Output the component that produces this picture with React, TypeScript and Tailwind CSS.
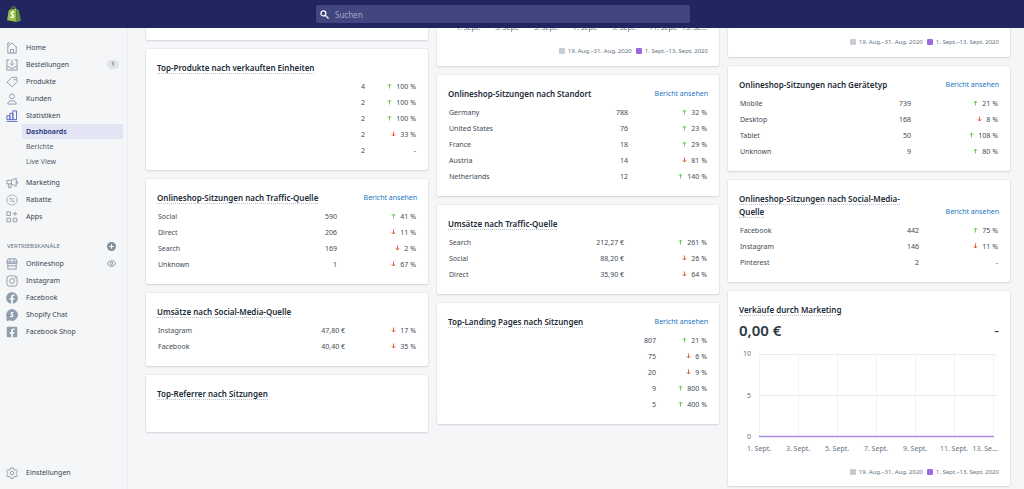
import type { ReactNode } from 'react';
import { FaFacebook, FaFacebookSquare } from 'react-icons/fa';

type Trend = 'up' | 'down' | 'none';

interface Row {
    label?: string;
    value: string;
    trend: Trend;
    change: string;
}

interface ReportCardProps {
    title: string;
    link?: boolean;
    underline?: boolean;
    changeWidth?: string;
    rows: Row[];
}

const up = (value: string, change: string, label = ''): Row => ({ label, value, change, trend: 'up' });
const down = (value: string, change: string, label = ''): Row => ({ label, value, change, trend: 'down' });
const flat = (value: string, label = ''): Row => ({ label, value, change: '-', trend: 'none' });

/* ---------- Icons ---------- */

function Icon({ children, active = false }: { children: ReactNode; active?: boolean }) {
    return (
        <svg
            viewBox="0 0 20 20"
            className={active ? 'h-3 w-3 shrink-0 text-[#5c6ac4]' : 'h-3 w-3 shrink-0 text-[#8f9cab]'}
            fill="none"
            stroke="currentColor"
            strokeWidth="1.6"
            strokeLinejoin="round"
            aria-hidden="true"
        >
            {children}
        </svg>
    );
}

const icons = {
    home: (
        <Icon>
            <path d="M1.500 9.500L10 1.500l8.500 8M3 8.500v10h14v-10M3 7V1.500h4" />
            <path d="M7.500 18.500v-6h5v6" />
        </Icon>
    ),
    orders: (
        <Icon>
            <path d="M6 1.500H1.500v17h17v-17H14" />
            <path d="M1.500 13H6l1.500 2.500h5L14 13h4.500M10 1v9M6.500 7l3.500 3.500L13.500 7" />
        </Icon>
    ),
    products: (
        <Icon>
            <path d="M9.500 2.500l8-.5 1.500 7-8.500 9-9-7.500 8-8z" />
            <circle cx="14.500" cy="6" r="1" />
        </Icon>
    ),
    customers: (
        <Icon>
            <circle cx="10" cy="5.500" r="4" />
            <path d="M3 18.500c0-3.500 2-5.500 7-5.500s7 2 7 5.500H3z" />
        </Icon>
    ),
    analytics: (
        <Icon active>
            <path d="M1.500 9.500h5V16h-5zM6.500 5.500h5V16h-5zM11.500 1.500h6V16h-6z" />
            <path d="M1 19h18" />
        </Icon>
    ),
    marketing: (
        <Icon>
            <path d="M1.500 5.500H9l8-3.500v13.500l-8-4H1.500v-6zM9 5.500v6M4.500 11.500V18h4v-6.500M17 7.500h2v3h-2" />
        </Icon>
    ),
    discounts: (
        <Icon>
            <circle cx="10" cy="10" r="8.500" strokeDasharray="2.600 0.700" />
            <path d="M7 13l6-6" />
            <circle cx="7.500" cy="7.500" r="1" />
            <circle cx="12.500" cy="12.500" r="1" />
        </Icon>
    ),
    apps: (
        <Icon>
            <path d="M1.500 1.500h6v6h-6zM1.500 12h6v6h-6zM12 12h6v6h-6zM15 1v7M11.500 4.500h7" />
        </Icon>
    ),
    store: (
        <Icon>
            <path d="M3.500 1.500h13l2 5v2.500h-17V6.500l2-5zM1.500 6.500h17M3 9.500v9h14v-9M3.500 13h13M6.500 1.500v7.500M13.500 1.500v7.500" />
        </Icon>
    ),
    instagram: (
        <Icon>
            <rect x="1.500" y="1.500" width="17" height="17" rx="4" />
            <circle cx="10" cy="10" r="4" />
            <circle cx="15" cy="5" r="0.500" />
        </Icon>
    ),
    facebook: <FaFacebook className="h-3 w-3 shrink-0 text-[#8f9cab]" />,
    chat: (
        <Icon>
            <path d="M10 1a9 9 0 1 1-4 17l-4.500 1 .5-5A9 9 0 0 1 10 1z" fill="currentColor" />
            <path d="M12.500 6.500c-2-1-4-.5-4 1s3.500 2 3 4-3 1.800-4.500.5" stroke="#fff" strokeWidth="1.900" />
        </Icon>
    ),
    facebookShop: <FaFacebookSquare className="h-3 w-3 shrink-0 text-[#8f9cab]" />,
    settings: (
        <Icon>
            <path d="M8 1.500h4l.6 2.600 2 1.100 2.500-.8 2 3.400L17.200 9.500v1.800l1.900 1.700-2 3.400-2.500-.8-2 1.100-.6 2.300H8l-.6-2.300-2-1.100-2.500.8-2-3.400 1.900-1.700V9.500L.9 7.800l2-3.400 2.500.8 2-1.100L8 1.500z" />
            <circle cx="10" cy="10.300" r="3" />
        </Icon>
    ),
};

function ShopLogo() {
    return (
        <svg viewBox="0 0 26 30" className="h-4 w-3.5" aria-hidden="true">
            <path d="M3 8l14-4 1 26L0 26.500 3 8z" fill="#95bf47" />
            <path d="M17 4l2 2.500 3 .5 4 20.500L18 30 17 4z" fill="#5e8e3e" />
            <path d="M7 8c0-4 3-7 5.500-7S16 4 16 7" fill="none" stroke="#95bf47" strokeWidth="1.500" />
            <path d="M13.500 12c-3-1.300-5.500 0-5 2.300s4 2.500 3.500 5.200-3.500 2.500-5.500 1" fill="none" stroke="#fff" strokeWidth="2.800" />
        </svg>
    );
}

function TrendArrow({ trend }: { trend: Trend }) {
    if (trend === 'none') return null;

    return (
        <svg
            viewBox="0 0 10 12"
            className={trend === 'up' ? 'mr-1 inline h-1.5 w-[5px] align-baseline text-[#50b83c]' : 'mr-1 inline h-1.5 w-[5px] rotate-180 align-baseline text-[#de3618]'}
            fill="none"
            stroke="currentColor"
            strokeWidth="1.600"
            aria-hidden="true"
        >
            <path d="M5 11V2M1.500 5.500L5 2l3.500 3.500" />
        </svg>
    );
}

/* ---------- Navigation ---------- */

function NavItem({ icon, label, badge }: { icon: ReactNode; label: string; badge?: string }) {
    return (
        <a href="#" className="flex h-[17px] items-center gap-2 pr-2 pl-1.5">
            {icon}
            <span className="flex-1">{label}</span>
            {badge && (
                <span className="h-[9px] w-3 rounded-full bg-[#dfe3e8] text-center text-[6px] leading-[9px]">{badge}</span>
            )}
        </a>
    );
}

function Sidebar() {
    return (
        <nav className="flex w-32 shrink-0 flex-col border-r border-[#ebeef1] bg-[#f4f6f8] pt-[11px] pb-2 text-[#3b4550]">
            <NavItem icon={icons.home} label="Home" />
            <NavItem icon={icons.orders} label="Bestellungen" badge="1" />
            <NavItem icon={icons.products} label="Produkte" />
            <NavItem icon={icons.customers} label="Kunden" />
            <NavItem icon={icons.analytics} label="Statistiken" />
            <div className="mr-1 mb-[5px] ml-[22px] flex flex-col text-[#56616d]">
                <a href="#" className="h-[15px] bg-[#e3e4f4] pl-1 leading-[15px] font-semibold text-[#202e78]">Dashboards</a>
                <a href="#" className="h-[15px] pl-1 leading-[15px]">Berichte</a>
                <a href="#" className="h-[15px] pl-1 leading-[15px]">Live View</a>
            </div>
            <NavItem icon={icons.marketing} label="Marketing" />
            <NavItem icon={icons.discounts} label="Rabatte" />
            <NavItem icon={icons.apps} label="Apps" />

            <div className="mt-3 flex h-[18px] items-center justify-between pr-[11px] pl-[7px] text-[6px] text-[#637381]">
                <h2>VERTRIEBSKANÄLE</h2>
                <button type="button" aria-label="Vertriebskanal hinzufügen">
                    <svg viewBox="0 0 20 20" className="h-[9px] w-[9px]">
                        <circle cx="10" cy="10" r="10" fill="#8190a0" />
                        <path d="M10 5v10M5 10h10" stroke="#fff" strokeWidth="2.200" />
                    </svg>
                </button>
            </div>
            <div className="flex items-center justify-between pr-[11px]">
                <NavItem icon={icons.store} label="Onlineshop" />
                <button type="button" aria-label="Onlineshop ansehen">
                    <svg viewBox="0 0 20 20" className="h-[9px] w-[9px]" fill="none" stroke="#74828f" strokeWidth="2">
                        <path d="M1 10c2-4 5-6 9-6s7 2 9 6c-2 4-5 6-9 6s-7-2-9-6z" />
                        <circle cx="10" cy="10" r="2.500" />
                    </svg>
                </button>
            </div>
            <NavItem icon={icons.instagram} label="Instagram" />
            <NavItem icon={icons.facebook} label="Facebook" />
            <NavItem icon={icons.chat} label="Shopify Chat" />
            <NavItem icon={icons.facebookShop} label="Facebook Shop" />

            <div className="mt-auto">
                <NavItem icon={icons.settings} label="Einstellungen" />
            </div>
        </nav>
    );
}

/* ---------- Cards ---------- */

function Card({ children, className = '' }: { children?: ReactNode; className?: string }) {
    return (
        <section className={`rounded-[2px] bg-white px-[11px] shadow-[0_0_0_1px_rgba(63,63,68,0.04),0_1px_2px_0_rgba(63,63,68,0.14)] ${className}`}>
            {children}
        </section>
    );
}

function CardHeader({ title, link, underline = true }: { title: string; link?: boolean; underline?: boolean }) {
    return (
        <div className="flex items-end justify-between gap-8 leading-[13px]">
            <h2 className="text-[8px] font-semibold text-[#212b36]">
                <span className={underline ? 'border-b border-dotted border-[#b9c2cb]' : ''}>{title}</span>
            </h2>
            {link && <a href="#" className="shrink-0 text-[#2276c4]">Bericht ansehen</a>}
        </div>
    );
}

function ReportCard({ title, link, underline, changeWidth = 'w-20', rows }: ReportCardProps) {
    return (
        <Card className="pt-3 pb-[11px]">
            <CardHeader title={title} link={link} underline={underline} />
            <table className="mt-[5px] w-full text-[#414b56]">
                <tbody>
                    {rows.map((row, i) => (
                        <tr key={i} className="h-4">
                            <td className="p-0 pl-px text-left">{row.label}</td>
                            <td className="p-0 text-right">{row.value}</td>
                            <td className={`p-0 pr-px text-right whitespace-nowrap ${changeWidth}`}>
                                <TrendArrow trend={row.trend} />
                                {row.change}
                            </td>
                        </tr>
                    ))}
                </tbody>
            </table>
        </Card>
    );
}

function Legend() {
    return (
        <div className="flex h-[9px] items-center justify-end gap-1 text-[6px] text-[#637381]">
            <span className="flex items-center gap-[3px]">
                <span className="h-1.5 w-1.5 rounded-[1px] bg-[#c4cdd5]" />
                19. Aug.–31. Aug. 2020
            </span>
            <span className="flex items-center gap-[3px]">
                <span className="h-1.5 w-1.5 rounded-[1px] bg-[#9c6ade]" />
                1. Sept.–13. Sept. 2020
            </span>
        </div>
    );
}

const dates = [
    { x: 20, label: '1. Sept.' },
    { x: 59, label: '3. Sept.' },
    { x: 98, label: '5. Sept.' },
    { x: 137, label: '7. Sept.' },
    { x: 176, label: '9. Sept.' },
    { x: 215, label: '11. Sept.' },
    { x: 246, label: '13. Se…' },
];

function DateLabels({ y }: { y: number }) {
    return (
        <g textAnchor="middle">
            {dates.map((d) => (
                <text key={d.label} x={d.x} y={y}>{d.label}</text>
            ))}
        </g>
    );
}

function MarketingChart() {
    return (
        <svg viewBox="0 0 260 110" className="mt-2 w-full fill-[#637381] text-[7px]">
            <path d="M20 8.500H258M20 49.500H258" stroke="#e9ecef" />
            <path
                d="M20.500 8V92M59.500 8V92M98.500 8V92M137.500 8V92M176.500 8V92M215.500 8V92M254.500 8V92"
                stroke="#eceef1"
                strokeDasharray="3 1"
            />
            <path d="M20 90.500H255" stroke="#a88be6" strokeWidth="1.500" />
            <g textAnchor="end">
                <text x="12" y="10">10</text>
                <text x="12" y="52">5</text>
                <text x="12" y="93">0</text>
            </g>
            <DateLabels y={105} />
        </svg>
    );
}

/* ---------- Page ---------- */

export default function App() {
    return (
        <div className="flex h-screen flex-col overflow-hidden bg-[#f4f6f8] font-['Noto_Sans','Open_Sans',sans-serif] text-[7px] leading-[10px]">
            <header className="relative z-10 flex h-7 shrink-0 items-center bg-[#212560] pr-[39px] pl-[7px]">
                <ShopLogo />
                <div className="mx-auto flex h-[18px] w-[374px] items-center gap-1.5 rounded-[2px] bg-[#42457f] px-1">
                    <svg viewBox="0 0 20 20" className="h-[9px] w-[9px]" fill="none" stroke="#fff" strokeWidth="2.800" aria-hidden="true">
                        <circle cx="7.500" cy="7.500" r="5.500" />
                        <path d="M12 12l7 7" />
                    </svg>
                    <input
                        type="search"
                        aria-label="Suchen"
                        placeholder="Suchen"
                        className="h-full flex-1 bg-transparent text-[8px] outline-none placeholder:text-[#a3a5c6]"
                    />
                </div>
            </header>

            <div className="flex min-h-0 flex-1">
                <Sidebar />
                <main className="grid min-w-0 flex-1 grid-cols-3 items-start gap-[9px] overflow-hidden pr-3.5 pl-[18px]">
                    <div className="flex flex-col gap-[9px]">
                        <Card className="h-3" />
                        <ReportCard
                            title="Top-Produkte nach verkauften Einheiten"
                            changeWidth="w-13"
                            rows={[up('4', '100 %'), up('2', '100 %'), up('2', '100 %'), down('2', '33 %'), flat('2')]}
                        />
                        <ReportCard
                            title="Onlineshop-Sitzungen nach Traffic-Quelle"
                            link
                            rows={[
                                up('590', '41 %', 'Social'),
                                down('206', '11 %', 'Direct'),
                                down('169', '2 %', 'Search'),
                                down('1', '67 %', 'Unknown'),
                            ]}
                        />
                        <ReportCard
                            title="Umsätze nach Social-Media-Quelle"
                            changeWidth="w-18"
                            rows={[down('47,80 €', '17 %', 'Instagram'), down('40,40 €', '35 %', 'Facebook')]}
                        />
                        <Card className="pt-3 pb-8">
                            <CardHeader title="Top-Referrer nach Sitzungen" />
                        </Card>
                    </div>

                    <div className="flex flex-col gap-[9px]">
                        <Card className="pb-[11px]">
                            <svg viewBox="0 0 260 8" className="mb-[10px] w-full fill-[#637381] text-[7px]">
                                <DateLabels y={2} />
                            </svg>
                            <Legend />
                        </Card>
                        <ReportCard
                            title="Onlineshop-Sitzungen nach Standort"
                            link
                            underline={false}
                            rows={[
                                up('788', '32 %', 'Germany'),
                                up('76', '23 %', 'United States'),
                                up('18', '29 %', 'France'),
                                down('14', '81 %', 'Austria'),
                                up('12', '140 %', 'Netherlands'),
                            ]}
                        />
                        <ReportCard
                            title="Umsätze nach Traffic-Quelle"
                            changeWidth="w-21"
                            rows={[
                                up('212,27 €', '261 %', 'Search'),
                                down('88,20 €', '26 %', 'Social'),
                                down('35,90 €', '64 %', 'Direct'),
                            ]}
                        />
                        <ReportCard
                            title="Top-Landing Pages nach Sitzungen"
                            link
                            changeWidth="w-13"
                            rows={[up('807', '21 %'), down('75', '6 %'), down('20', '9 %'), up('9', '800 %'), up('5', '400 %')]}
                        />
                    </div>

                    <div className="flex flex-col gap-[9px]">
                        <Card className="pt-[9px] pb-[11px]">
                            <Legend />
                        </Card>
                        <ReportCard
                            title="Onlineshop-Sitzungen nach Gerätetyp"
                            link
                            underline={false}
                            changeWidth="w-22"
                            rows={[
                                up('739', '21 %', 'Mobile'),
                                down('168', '8 %', 'Desktop'),
                                up('50', '108 %', 'Tablet'),
                                up('9', '80 %', 'Unknown'),
                            ]}
                        />
                        <ReportCard
                            title="Onlineshop-Sitzungen nach Social-Media-Quelle"
                            link
                            rows={[up('442', '75 %', 'Facebook'), down('146', '11 %', 'Instagram'), flat('2', 'Pinterest')]}
                        />
                        <Card className="pt-3 pb-2.5">
                            <CardHeader title="Verkäufe durch Marketing" />
                            <div className="mt-1.5 flex items-center justify-between text-[15px] leading-4 text-[#2c3743]">
                                <p className="font-semibold">0,00 €</p>
                                <span>-</span>
                            </div>
                            <MarketingChart />
                            <div className="pt-[11px]">
                                <Legend />
                            </div>
                        </Card>
                    </div>
                </main>
            </div>
        </div>
    );
}
